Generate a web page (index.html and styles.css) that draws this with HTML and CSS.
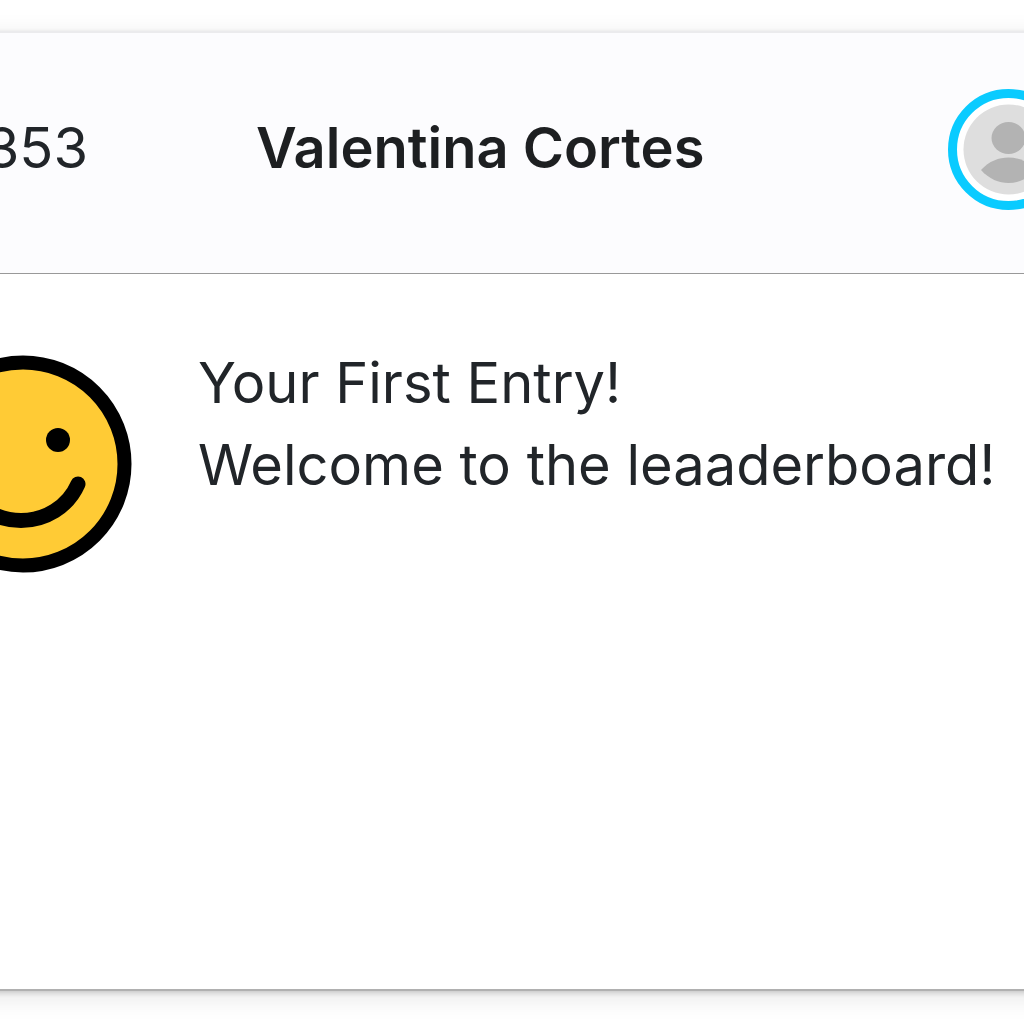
FILE: index.html
```html
<!DOCTYPE html>
<html lang="en">
<head>
<meta charset="utf-8">
<meta name="viewport" content="width=device-width, initial-scale=1">
<title>Leaderboard</title>
<link rel="stylesheet" href="styles.css">
</head>
<body>
<main class="card">
  <header class="card-header">
    <span class="score">353</span>
    <h1 class="name">Valentina Cortes</h1>
    <span class="avatar">
      <svg class="avatar-icon" viewBox="0 0 122 122" role="img" aria-label="Profile picture">
        <circle cx="60.500" cy="60.500" r="56" fill="#fff" stroke="#0acbff" stroke-width="9"/>
        <circle cx="60.500" cy="60.500" r="45" fill="#dedede"/>
        <ellipse cx="60.500" cy="49" rx="17" ry="16" fill="#b3b3b3"/>
        <path d="M33 81C41 72 51 68.500 60.500 68.500S80 72 88 81C80 90 70 94 60.500 94S41 90 33 81Z" fill="#b3b3b3"/>
      </svg>
    </span>
  </header>
  <section class="card-body">
    <div class="mood">
      <svg class="mood-icon" viewBox="0 0 218 218" role="img" aria-label="Smiling face">
        <circle cx="109" cy="109" r="101.500" fill="#ffcb35" stroke="#000" stroke-width="14"/>
        <circle cx="73" cy="85" r="12"/>
        <circle cx="144" cy="85" r="12"/>
        <path d="M50 129C60 152 83 165.500 107 165.500S154 152 164 129" fill="none" stroke="#000" stroke-width="15" stroke-linecap="round"/>
      </svg>
    </div>
    <div class="message">
      <p>Your First Entry!</p>
      <p>Welcome to the leaaderboard!</p>
    </div>
  </section>
</main>
</body>
</html>
```
FILE: styles.css
```css
* {
  box-sizing: border-box;
}

body {
  margin: 0;
  padding: 31px 0 33px;
  min-height: 100vh;
  display: flex;
  background: #fff;
  color: #212529;
  font: 400 56px/82px Inter, "Noto Sans", sans-serif;
  overflow: hidden;
}

.card {
  flex: 1;
  min-width: 0;
  margin: 0 -32px;
  background: #fff;
  border-top: 2px solid #ebebed;
  border-bottom: 2px solid #b0b0b0;
  box-shadow: 0 6px 24px rgba(0, 0, 0, 0.1), 0 2px 5px rgba(0, 0, 0, 0.16);
}

.card-header {
  display: grid;
  grid-template-columns: 88px 1fr 76px;
  align-items: center;
  padding: 56px 32px 62px;
  background: #fcfcfe;
  border-bottom: 1px solid #999;
}

.score {
  display: flex;
  justify-content: flex-end;
  padding-bottom: 4px;
}

.name {
  margin: 0;
  padding: 0 0 4px 168px;
  font-size: 56px;
  font-weight: 580;
  color: #1d1f21;
  white-space: nowrap;
}

.avatar {
  display: flex;
}

.avatar-icon {
  flex: none;
  width: 122px;
  height: 122px;
}

.card-body {
  display: grid;
  grid-template-columns: 132px 1fr;
  column-gap: 66px;
  padding: 68px 32px 0;
}

.mood {
  display: flex;
  justify-content: flex-end;
  padding-top: 13px;
}

.mood-icon {
  flex: none;
  width: 218px;
  height: 218px;
}

.message p {
  margin: 0;
  font-weight: 440;
  white-space: nowrap;
}
```
